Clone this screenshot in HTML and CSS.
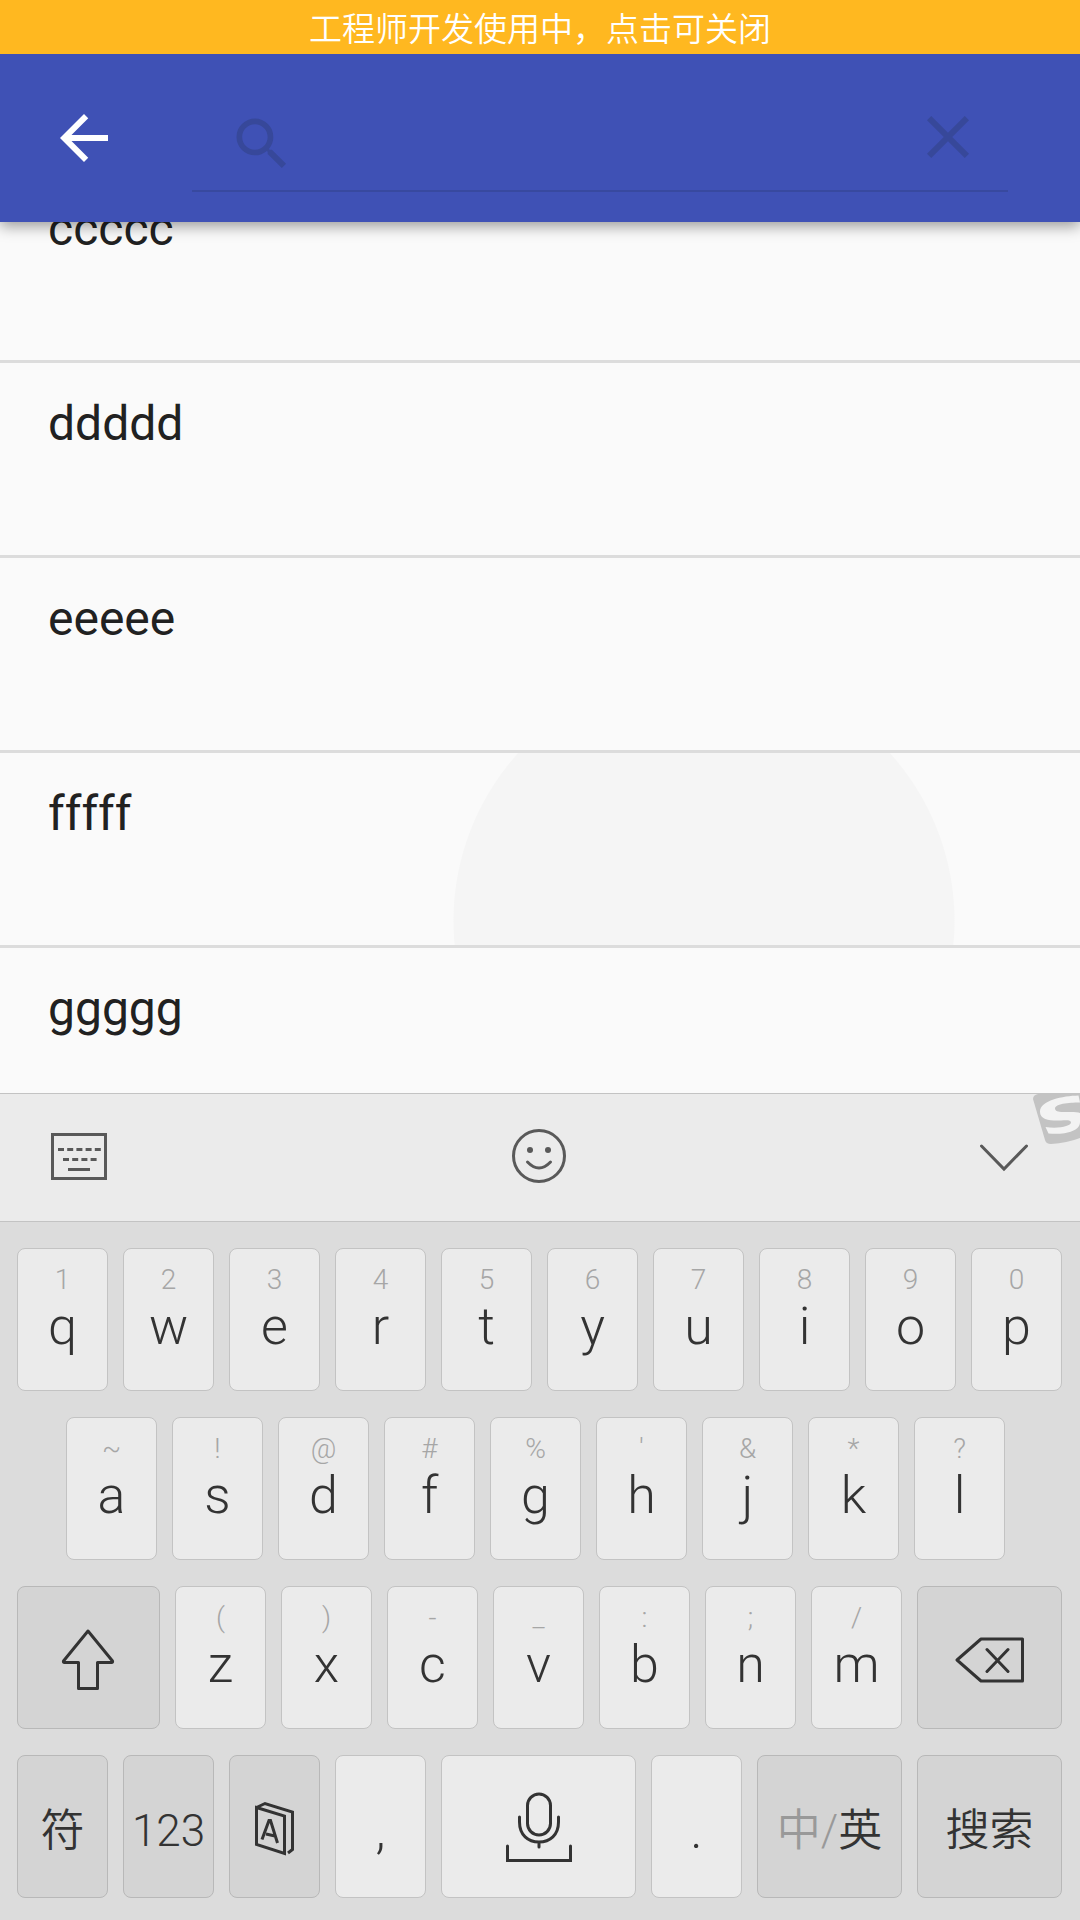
FILE: index.html
```html
<!DOCTYPE html>
<html lang="zh-CN">
<head>
<meta charset="utf-8">
<meta name="viewport" content="width=device-width, initial-scale=1">
<title>搜索</title>
<link rel="stylesheet" href="styles.css">
</head>
<body>
<button class="dev-banner" type="button">工程师开发使用中，点击可关闭</button>

<header class="toolbar">
  <button class="icon-button" type="button" aria-label="返回">
    <svg class="icon" viewBox="0 0 24 24"><path fill="#fff" d="M20 11H7.83l5.59-5.59L12 4l-8 8 8 8 1.41-1.41L7.83 13H20v-2z"/></svg>
  </button>
  <form class="search" role="search">
    <svg class="search-icon" viewBox="0 0 24 24"><path d="M15.5 14h-.79l-.28-.27A6.47 6.47 0 0 0 16 9.5 6.5 6.5 0 1 0 9.5 16c1.61 0 3.09-.59 4.23-1.57l.27.28v.79l5 4.99L20.49 19l-4.99-5zm-6 0C7.01 14 5 11.99 5 9.5S7.01 5 9.5 5 14 7.01 14 9.5 11.99 14 9.5 14z"/></svg>
    <input class="search-input" type="text" aria-label="搜索">
    <button class="icon-button" type="button" aria-label="清除">
      <svg class="icon clear-icon" viewBox="0 0 24 24"><path d="M19 6.41L17.59 5 12 10.59 6.41 5 5 6.41 10.59 12 5 17.59 6.41 19 12 13.41 17.59 19 19 17.59 13.41 12z"/></svg>
    </button>
  </form>
</header>

<main class="results">
  <ul class="list">
    <li class="row">ccccc</li>
    <li class="row">ddddd</li>
    <li class="row">eeeee</li>
    <li class="row row-pressed">fffff</li>
    <li class="row">ggggg</li>
  </ul>
</main>

<section class="ime" aria-label="键盘">
  <div class="ime-bar">
    <button class="icon-button" type="button" aria-label="键盘">
      <svg class="icon line" viewBox="0 0 72 72"><rect x="14.500" y="14.500" width="53" height="44"/><path stroke-dasharray="6 3.200" d="M20 29.500h43"/><path stroke-dasharray="6 3.200" d="M25 39.500h34"/><path d="M30 49.500h22"/></svg>
    </button>
    <button class="icon-button" type="button" aria-label="表情">
      <svg class="icon line" viewBox="0 0 72 72"><circle cx="36" cy="36" r="25.500"/><circle class="dot" cx="27" cy="30" r="3"/><circle class="dot" cx="45" cy="30" r="3"/><path stroke-linecap="round" d="M24.500 42q11.500 12 23 0"/></svg>
    </button>
    <button class="icon-button" type="button" aria-label="收起">
      <svg class="icon line" viewBox="0 0 72 72"><path stroke-linecap="round" d="M13.500 26L36 49l22.500-23"/></svg>
    </button>
    <svg class="ime-logo" viewBox="0 0 47 51"><path fill="#c3c3c3" d="M5 0H47V44Q34 49 18 50Q13 50 12 46L0 5Q0 1 5 0Z"/><path fill="#f3f3f3" d="M45.500 1.500C30 2 7 6 7 18C7 26 18 27 28 26.500C34 26 38 26 38 28.500C38 32 26 35 12.500 33L15.500 39.500C30 41 47 38 47 28V19C44 17.500 36 18 30 18C25 18 22 17 22 14.500C22 9 40 8.500 47 8.500Z"/></svg>
  </div>

  <div class="keys">
    <div class="key-row">
      <button class="key"><small>1</small>q</button>
      <button class="key"><small>2</small>w</button>
      <button class="key"><small>3</small>e</button>
      <button class="key"><small>4</small>r</button>
      <button class="key"><small>5</small>t</button>
      <button class="key"><small>6</small>y</button>
      <button class="key"><small>7</small>u</button>
      <button class="key"><small>8</small>i</button>
      <button class="key"><small>9</small>o</button>
      <button class="key"><small>0</small>p</button>
    </div>
    <div class="key-row key-row-inset">
      <button class="key"><small>~</small>a</button>
      <button class="key"><small>!</small>s</button>
      <button class="key"><small>@</small>d</button>
      <button class="key"><small>#</small>f</button>
      <button class="key"><small>%</small>g</button>
      <button class="key"><small>'</small>h</button>
      <button class="key"><small>&amp;</small>j</button>
      <button class="key"><small>*</small>k</button>
      <button class="key"><small>?</small>l</button>
    </div>
    <div class="key-row">
      <button class="key key-fn key-shift" aria-label="Shift">
        <svg class="key-icon" viewBox="0 0 72 72"><path stroke-linejoin="round" d="M35 5L10.500 35Q10 36.500 11.500 36.500H25.500V62.500H44.500V36.500H58.500Q60 36.500 59.500 35Z"/></svg>
      </button>
      <button class="key"><small>(</small>z</button>
      <button class="key"><small>)</small>x</button>
      <button class="key"><small>-</small>c</button>
      <button class="key"><small>_</small>v</button>
      <button class="key"><small>:</small>b</button>
      <button class="key"><small>;</small>n</button>
      <button class="key"><small>/</small>m</button>
      <button class="key key-fn key-wide" aria-label="退格">
        <svg class="key-icon" viewBox="0 0 72 72"><path stroke-linejoin="round" stroke-linecap="round" d="M3 34L27 13H68.500V55H27ZM33 23.500l21 22M54 23.500l-21 22"/></svg>
      </button>
    </div>
    <div class="key-row">
      <button class="key key-fn">符</button>
      <button class="key key-fn">123</button>
      <button class="key key-fn key-picture" aria-label="词典">
        <svg class="key-icon" viewBox="0 0 72 72"><path d="M17.500 16.500L45.500 25V62.500L17.500 53.500ZM17.500 16.500L26 12.500L53.500 21V58.500L49 62M23 48.500L30 29.500H31.500L38.500 52M27 43L36 45"/></svg>
      </button>
      <button class="key key-mark">,</button>
      <button class="key key-space key-picture" aria-label="空格">
        <svg class="key-icon" viewBox="0 0 72 72"><rect x="24.500" y="3" width="23" height="41" rx="11.500"/><path stroke-linecap="round" d="M16.500 26V31C16.500 44 25 51 36 51S55.500 44 55.500 31V26M36 51V56M4.500 55V69.500H67.500V55"/></svg>
      </button>
      <button class="key key-mark">.</button>
      <button class="key key-fn key-wide"><span><span class="muted">中/</span>英</span></button>
      <button class="key key-fn key-wide">搜索</button>
    </div>
  </div>
</section>
</body>
</html>
```

FILE: styles.css
```css
* {
  box-sizing: border-box;
}

body {
  display: flex;
  flex-direction: column;
  height: 100vh;
  margin: 0;
  overflow: hidden;
  background: #fafafa;
  color: #212121;
  font-family: Roboto, "Noto Sans CJK SC", sans-serif;
  font-weight: 350;
}

button {
  margin: 0;
  padding: 0;
  border: 0;
  background: none;
  color: inherit;
  font: inherit;
}

.dev-banner {
  position: relative;
  z-index: 2;
  flex: none;
  height: 54px;
  padding-top: 6px;
  background: #ffb820;
  color: #fff;
  font-size: 33px;
  line-height: 48px;
}

.toolbar {
  position: relative;
  z-index: 1;
  display: flex;
  flex: none;
  align-items: center;
  gap: 72px;
  height: 168px;
  padding: 0 72px 0 48px;
  background: #3f51b5;
  box-shadow: 0 4px 14px rgba(0, 0, 0, 0.4);
}

.icon-button {
  display: flex;
  flex: none;
}

.icon {
  width: 72px;
  height: 72px;
}

.search {
  display: flex;
  flex: 1;
  align-items: center;
  gap: 24px;
  min-width: 0;
  height: 108px;
  padding: 0 24px 0 36px;
  border-bottom: 2px solid #38499f;
}

.search-icon {
  flex: none;
  width: 68px;
  height: 68px;
  margin-top: 14px;
}

.search-icon,
.clear-icon {
  fill: #37489a;
}

.search-input {
  flex: 1;
  width: 100%;
  min-width: 0;
  border: 0;
  outline: 0;
  background: transparent;
  color: #fff;
  font: inherit;
  font-size: 48px;
}

.results {
  flex: 1 1 0;
  min-height: 0;
  overflow: hidden;
}

/* The list is scrolled part of a row under the toolbar. */
.list {
  margin: -54px 0 0;
  padding: 0;
  list-style: none;
}

.row {
  height: 195px;
  padding: 33px 48px;
  border-bottom: 3px solid #dcdcdc;
  font-size: 48px;
  font-weight: 400;
  line-height: 56px;
}

.row-pressed {
  background: radial-gradient(circle at 704px 168px, #f5f5f5 250px, transparent 251px);
}

.ime {
  flex: none;
  background: #dcdcdc;
  color: #333;
}

.ime-bar {
  position: relative;
  display: flex;
  align-items: center;
  justify-content: space-between;
  height: 129px;
  padding: 0 40px 3px 38px;
  border-top: 1px solid #c3c3c3;
  border-bottom: 1px solid #c3c3c3;
  background: #ebebeb;
}

.line {
  fill: none;
  stroke: #595959;
  stroke-width: 3;
}

.line .dot {
  fill: #595959;
  stroke: none;
}

.ime-logo {
  position: absolute;
  top: 0;
  right: 0;
  width: 47px;
  height: 51px;
}

.keys {
  display: flex;
  flex-direction: column;
  gap: 26px;
  padding: 26px 18px 22px 17px;
}

.key-row {
  display: flex;
  gap: 15px;
}

.key-row-inset {
  padding: 0 57px 0 49px;
}

.key {
  display: flex;
  flex: 89 1 0;
  flex-direction: column;
  align-items: center;
  min-width: 0;
  height: 143px;
  padding-top: 14px;
  border: 1px solid #c3c3c3;
  border-radius: 8px;
  background: #ebebeb;
  font-size: 52px;
  line-height: 60px;
}

.key small {
  color: #a6a6a6;
  font-size: 28px;
  line-height: 34px;
}

.key-fn,
.key-mark,
.key-space {
  justify-content: center;
  padding-top: 8px;
}

.key-fn {
  border-color: #b8b8b8;
  background: #d4d4d4;
  font-size: 44px;
}

.key-picture {
  padding-top: 0;
}

.key-shift {
  flex-grow: 141;
}

.key-wide {
  flex-grow: 143;
}

.key-space {
  flex-grow: 193;
}

.key-icon {
  width: 72px;
  height: 72px;
  fill: none;
  stroke: #333;
  stroke-width: 3;
}

.muted {
  color: #999;
}
```
